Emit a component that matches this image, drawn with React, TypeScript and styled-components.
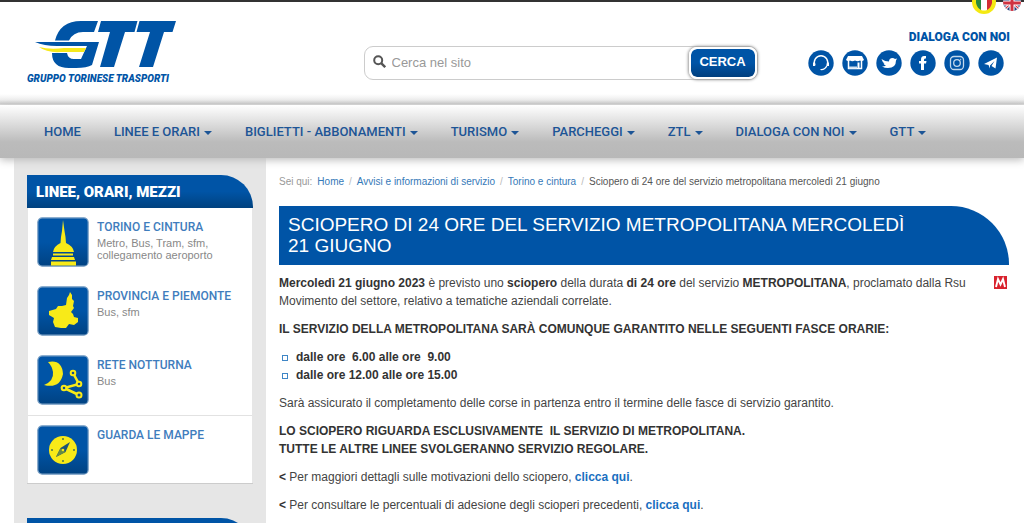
import React from "react";
import styled, { createGlobalStyle } from "styled-components";

const blue = "#0054a6";
const sans = `"Liberation Sans", Arial, sans-serif`;
const display = `Roboto, "Liberation Sans", sans-serif`;

const GlobalStyle = createGlobalStyle`
  *, *::before, *::after { box-sizing: border-box; }
  html { overflow: hidden; }
  body { margin: 0; background: #fff; color: #444; font: 13px/18px ${sans}; }
  a { text-decoration: none; }
`;

const TopBar = styled.div`
  height: 2px;
  background: #333;
`;

const Header = styled.header`
  display: flex;
  justify-content: space-between;
  height: 103px;
  padding: 0 14px 0 27px;
  background: linear-gradient(#fff 92px, #ededed 98px, #c9c9c9 102px, #e8e8e8 103px);
`;

const LogoLink = styled.a`
  padding-top: 18px;
  svg { display: block; }
`;

const SearchForm = styled.form`
  display: flex;
  align-items: center;
  width: 394px;
  height: 34px;
  margin: 44px 0 0 134px;
  padding-left: 8px;
  border: 1px solid #ccc;
  border-radius: 9px;
  background: #fff;
  svg { margin-bottom: 4px; }
`;

const SearchInput = styled.input`
  flex: 1;
  min-width: 0;
  padding: 0 6px;
  border: 0;
  outline: 0;
  background: transparent;
  color: #555;
  font: 13px/18px ${sans};
  &::placeholder { color: #999; opacity: 1; }
`;

const SearchButton = styled.button`
  width: 68px;
  height: 32px;
  padding: 0 0 2px;
  border: 2px solid #fff;
  border-radius: 8px;
  background: linear-gradient(${blue} 50%, #003f7e) padding-box;
  box-shadow: 0 0 3px 1px #999;
  color: #fff;
  font: bold 13px/18px ${sans};
`;

const Contacts = styled.div`
  display: flex;
  flex-direction: column;
  align-items: flex-end;
`;

const Languages = styled.div`
  display: flex;
  align-items: flex-start;
  gap: 6px;
  height: 28px;
  margin: -2px -12px 0 0;
  svg { display: block; }
`;

const ContactsTitle = styled.strong`
  color: ${blue};
  font: 900 12px/18px ${display};
`;

const SocialList = styled.div`
  display: flex;
  gap: 8px;
  padding: 4px 6px 0 0;
  svg { display: block; }
`;

const Nav = styled.nav`
  position: relative;
  display: flex;
  align-items: center;
  gap: 33px;
  height: 53px;
  padding: 0 44px;
  background: linear-gradient(#fff, #bbb 70%, #b8b8b8);
  box-shadow: 0 2px 8px #bbb;
`;

const NavLink = styled.a<{ $menu?: boolean }>`
  display: flex;
  align-items: center;
  gap: 4px;
  color: #1d5596;
  font: 500 13px/18px ${display};
  white-space: nowrap;
  &::after {
    content: "";
    display: ${(p) => (p.$menu ? "block" : "none")};
    margin-top: 2px;
    border: 4px solid transparent;
    border-top-color: currentColor;
    border-bottom: 0;
  }
`;

const Body = styled.div`
  display: flex;
  align-items: stretch;
  padding-left: 14px;
`;

const Sidebar = styled.aside`
  flex: 0 0 252px;
  padding: 17px 13px 0;
  background: #e6e6e6;
`;

const Panel = styled.section`
  margin-bottom: 34px;
  border-bottom: 1px solid #ccc;
`;

const PanelTitle = styled.h2`
  height: 33px;
  margin: 0;
  padding: 0 9px;
  border-radius: 0 32px 0 0;
  background: linear-gradient(${blue} 50%, #00427f);
  color: #fff;
  font: 900 15px/34px ${display};
`;

const Service = styled.a<{ $divided?: boolean }>`
  display: flex;
  gap: 8px;
  height: ${(p) => (p.$divided ? 68 : 69)}px;
  margin: 0 1px;
  padding: 9px;
  background: #fff;
  border-top: ${(p) => (p.$divided ? "1px solid #e2e2e2" : "0")};
  svg { flex: none; }
`;

const ServiceName = styled.h3`
  margin: 2px 0;
  color: #3f7dbd;
  font: 500 12px/16px ${display};
  white-space: nowrap;
`;

const ServiceText = styled.p`
  margin: 0;
  color: #888;
  font: 11px/12px ${sans};
`;

const Main = styled.main`
  flex: 1;
  min-width: 0;
  padding: 16px 15px 12px 13px;
`;

const Breadcrumb = styled.nav`
  display: flex;
  gap: 5px;
  font-size: 10px;
  line-height: 16px;
  color: #555;
  white-space: nowrap;
  a { color: #3579b8; }
`;

const Muted = styled.span`
  color: #999;
`;

const Slash = styled.span`
  color: #bbb;
`;

const Title = styled.h1`
  margin: 16px 0 9px;
  padding: 8px 96px 9px 9px;
  border-radius: 0 58px 0 0;
  background: ${blue};
  color: #fff;
  font: 19px/21px ${sans};
  text-transform: uppercase;
`;

const Lead = styled.div`
  display: flex;
  justify-content: space-between;
  align-items: flex-start;
  gap: 20px;
  svg { flex: none; margin: 2px 2px 0 0; }
`;

const Paragraph = styled.p`
  margin: 0 0 10px;
  font-size: 12px;
  white-space: pre-wrap;
  b { color: #333; }
  a { color: #1a6fbf; font-weight: bold; }
`;

const Times = styled.ul`
  margin: 0 0 10px;
  padding: 0 0 0 3px;
  list-style: none;
`;

const Time = styled.li`
  display: flex;
  align-items: center;
  gap: 8px;
  color: #333;
  font-size: 12px;
  font-weight: bold;
  white-space: pre;
  &::before {
    content: "";
    width: 6px;
    height: 6px;
    margin-top: 2px;
    border: 1px solid #3f86c6;
  }
`;

const Logo = () => (
  <svg width="152" height="67" viewBox="0 0 152 67" role="img" aria-label="GTT Gruppo Torinese Trasporti">
    <g fill={blue}>
      <path d="M71 1 67 12H56Q46 12 42 20.500H28Q33 1 54 1Z" />
      <path d="M8 22H72L65 45Q60 48 49 48H42Q25 48 25 33H40Q41 39 47 39H54L60 26H30Q17 26 8 22Z" />
      <path d="M74 1H110.500L107.500 12H98L87 47H73L83 12H71Z" />
      <path d="M112.500 1H149L145.500 12H137L126 47H112L123 12H109.500Z" />
    </g>
    <path d="M12 27Q23 30 37 28H59L57 32H34Q20 33 12 27Z" fill="#f6e91c" />
    <text x="0" y="62" fill={blue} fontFamily="Roboto, sans-serif" fontWeight="900" fontStyle="italic" fontSize="10">
      GRUPPO TORINESE TRASPORTI
    </text>
  </svg>
);

const SearchIcon = () => (
  <svg width="13" height="13" viewBox="0 0 13 13" fill="none" stroke="#555">
    <circle cx="5.200" cy="5.200" r="4" strokeWidth="2" />
    <path d="m8.200 8.200 4 4" strokeWidth="2.400" />
  </svg>
);

const socials: { name: string; art: React.ReactNode }[] = [
  {
    name: "Assistenza",
    art: (
      <g fill="none" stroke="#fff">
        <path d="M7 15.500A6.700 6.700 0 1 1 19 15.500" strokeWidth="1.400" />
        <path d="M19 15.500Q17 20 12.500 19.500" strokeWidth="1.200" />
        <path d="M6 12.500v3.500M20 12.500v3.500" strokeWidth="2" />
      </g>
    ),
  },
  {
    name: "Negozio",
    art: (
      <g>
        <path d="M6 6H20L22 10Q20 12 18 10.500Q16 12 13 10.500Q10 12 8 10.500Q6 12 4 10Z" fill="#fff" />
        <path d="M6.500 11V18.500H19.500V11" fill="none" stroke="#fff" strokeWidth="1.500" />
        <path d="M15.500 12.500h2v6h-2z" fill="#fff" />
        <path d="M7 16.500h8v2h-8z" fill="#cfe0f0" />
      </g>
    ),
  },
  {
    name: "Twitter",
    art: <path d="M5.500 9Q9 11.500 13 11.500Q13 8 16.500 8Q18 8 19 9L21 8.500L20 10.500Q20 18 12 18Q8.500 18 6 16.500Q8.500 16.500 10 15.500Q8 15 7.500 13.500H8.500Q6.500 12.500 5.500 9Z" fill="#fff" />,
  },
  {
    name: "Facebook",
    art: <path d="M11 20V13.500H9V11H11V9.500Q11 6 14 6H16V8.500H15Q14 8.500 14 10V11H16.500L16 13.500H14V20Z" fill="#fff" />,
  },
  {
    name: "Instagram",
    art: (
      <g fill="none" stroke="#c3d8ec" strokeWidth="1.300">
        <rect x="6.500" y="6.500" width="13" height="13" rx="3.500" />
        <circle cx="13" cy="13" r="3.300" />
        <path d="M16.200 9.500h1" />
      </g>
    ),
  },
  {
    name: "Telegram",
    art: <path d="M6 14 19 7.500 17.500 18.500 13.500 16 16.500 11 12 15.500V18.500L10.500 15Z" fill="#fff" />,
  },
];

const ItalianFlag = () => (
  <svg width="24" height="16" viewBox="0 0 24 16">
    <circle cx="12" cy="2" r="12" fill="#f4e912" />
    <path d="M4 0H9V10Q5 8 4 3Z" fill="#278a42" />
    <path d="M9 0H15V10Q12 11 9 10Z" fill="#fff" />
    <path d="M15 0H20V3Q19 8 15 10Z" fill="#d22f35" />
  </svg>
);

const BritishFlag = () => (
  <svg width="20" height="16" viewBox="0 0 20 16">
    <defs>
      <clipPath id="uk"><circle cx="10" cy="2" r="9" /></clipPath>
    </defs>
    <g clipPath="url(#uk)">
      <path d="M0 0H20V12H0Z" fill="#28437f" />
      <path d="m0 12 10-10 10 10" stroke="#fff" strokeWidth="3" fill="none" />
      <path d="m0 12 10-10 10 10" stroke="#cf3341" strokeWidth="1.200" fill="none" />
      <path d="M10 0V12M0 3H20" stroke="#fff" strokeWidth="5" />
      <path d="M10 0V12M0 3H20" stroke="#cf3341" strokeWidth="3" />
    </g>
  </svg>
);

const Tile = ({ id, children }: { id: string; children: React.ReactNode }) => (
  <svg width="52" height="50" viewBox="0 0 52 50">
    <defs>
      <linearGradient id={id} x2="0" y2="1">
        <stop offset=".5" stopColor={blue} />
        <stop offset="1" stopColor="#004282" />
      </linearGradient>
    </defs>
    <rect x=".8" y=".8" width="50.400" height="48.400" rx="4.500" fill={`url(#${id})`} stroke="#7ea3c7" strokeWidth="1.200" />
    {children}
  </svg>
);

const yellow = "#f8ea18";

const services = [
  {
    id: "torino",
    name: "TORINO E CINTURA",
    text: "Metro, Bus, Tram, sfm, collegamento aeroporto",
    art: (
      <g fill={yellow}>
        <path d="M26 3 27.500 14 28.500 20 29 26Q36 29 37 35H16Q17 29 23.500 26L24 20 25 14Z" />
        <path d="M16 36.500H36V38.500H16ZM14 43 15 40H37L38 43ZM14 44.500H39V48.500H14Z" />
      </g>
    ),
  },
  {
    id: "provincia",
    name: "PROVINCIA E PIEMONTE",
    text: "Bus, sfm",
    art: <path d="m33 6 2 3 0 4 2 2-1 5 1 2-3 4 2 2 1 3 4 1v4l-4 3-5-1-3 4-5 0-6-1-2-5 1-4-5-3 0-4 7-2 2-3h4l4-1 1-7 2-3Z" fill={yellow} />,
  },
  {
    id: "notturna",
    name: "RETE NOTTURNA",
    text: "Bus",
    art: (
      <g>
        <path d="M11 7Q25 4 26 19Q23 34 7 30Q17 26 16 17Q15 11 11 7Z" fill={yellow} />
        <g fill="#174f88" stroke={yellow} strokeWidth="2">
          <path d="M36 18 42 29 27 33 42 40" fill="none" strokeWidth="2.500" />
          <circle cx="36" cy="18" r="2.300" />
          <circle cx="42" cy="29" r="2.300" />
          <circle cx="27" cy="33" r="2.300" />
          <circle cx="42" cy="40" r="2.500" />
        </g>
      </g>
    ),
  },
  {
    id: "mappe",
    name: "GUARDA LE MAPPE",
    text: "",
    divided: true,
    art: (
      <g>
        <circle cx="26" cy="25" r="14" fill={yellow} />
        <path d="m33 17-4.500 10L19 32l4.500-9Z" fill="#1c5377" />
        <path d="m19 32 4.500-9 5 4Z" fill="#688b43" />
        <circle cx="26" cy="25" r="1.300" fill={yellow} />
        <path d="M26 13v2M26 35v2M14 25h2M36 25h2" stroke="#4e7548" strokeWidth="1.500" />
      </g>
    ),
  },
];

const menu = ["HOME", "LINEE E ORARI", "BIGLIETTI - ABBONAMENTI", "TURISMO", "PARCHEGGI", "ZTL", "DIALOGA CON NOI", "GTT"];

const MetroMark = () => (
  <svg width="13" height="13" viewBox="0 0 13 13" role="img" aria-label="Metropolitana">
    <path d="M0 0H13V13H0Z" fill="#d9232e" />
    <path d="M2 11 4 3 6.500 8.500 9 3 11 11" fill="none" stroke="#fff" strokeWidth="1.900" />
  </svg>
);

export default function App() {
  return (
    <>
      <GlobalStyle />
      <TopBar />
      <Header>
        <LogoLink href="#"><Logo /></LogoLink>
        <SearchForm role="search">
          <SearchIcon />
          <SearchInput type="search" aria-label="Cerca nel sito" placeholder="Cerca nel sito" />
          <SearchButton type="button">CERCA</SearchButton>
        </SearchForm>
        <Contacts>
          <Languages>
            <a href="#" aria-label="Italiano"><ItalianFlag /></a>
            <a href="#" aria-label="English"><BritishFlag /></a>
          </Languages>
          <ContactsTitle>DIALOGA CON NOI</ContactsTitle>
          <SocialList>
            {socials.map((s) => (
              <a href="#" key={s.name} aria-label={s.name}>
                <svg width="26" height="26" viewBox="0 0 26 26">
                  <circle cx="13" cy="13" r="12.700" fill={blue} />
                  {s.art}
                </svg>
              </a>
            ))}
          </SocialList>
        </Contacts>
      </Header>
      <Nav>
        {menu.map((m, i) => (
          <NavLink href="#" key={m} $menu={i > 0}>{m}</NavLink>
        ))}
      </Nav>
      <Body>
        <Sidebar>
          <Panel>
            <PanelTitle>LINEE, ORARI, MEZZI</PanelTitle>
            {services.map((s) => (
              <Service href="#" key={s.id} $divided={s.divided}>
                <Tile id={s.id}>{s.art}</Tile>
                <div>
                  <ServiceName>{s.name}</ServiceName>
                  {s.text && <ServiceText>{s.text}</ServiceText>}
                </div>
              </Service>
            ))}
          </Panel>
          <PanelTitle as="div" />
        </Sidebar>
        <Main>
          <Breadcrumb aria-label="Percorso">
            <Muted>Sei qui:</Muted>
            <a href="#">Home</a>
            <Slash>/</Slash>
            <a href="#">Avvisi e informazioni di servizio</a>
            <Slash>/</Slash>
            <a href="#">Torino e cintura</a>
            <Slash>/</Slash>
            <span>Sciopero di 24 ore del servizio metropolitana mercoledì 21 giugno</span>
          </Breadcrumb>
          <Title>Sciopero di 24 ore del servizio metropolitana mercoledì 21 giugno</Title>
          <Lead>
            <Paragraph>
              <b>Mercoledì 21 giugno 2023</b> è previsto uno <b>sciopero</b> della durata <b>di 24 ore</b> del servizio <b>METROPOLITANA</b>, proclamato dalla Rsu Movimento del settore, relativo a tematiche aziendali correlate.
            </Paragraph>
            <MetroMark />
          </Lead>
          <Paragraph><b>IL SERVIZIO DELLA METROPOLITANA SARÀ COMUNQUE GARANTITO NELLE SEGUENTI FASCE ORARIE:</b></Paragraph>
          <Times>
            <Time>dalle ore  6.00 alle ore  9.00</Time>
            <Time>dalle ore 12.00 alle ore 15.00</Time>
          </Times>
          <Paragraph>Sarà assicurato il completamento delle corse in partenza entro il termine delle fasce di servizio garantito.</Paragraph>
          <Paragraph>
            <b>LO SCIOPERO RIGUARDA ESCLUSIVAMENTE{"  "}IL SERVIZIO DI METROPOLITANA.<br />TUTTE LE ALTRE LINEE SVOLGERANNO SERVIZIO REGOLARE.</b>
          </Paragraph>
          <Paragraph><b>&lt;</b> Per maggiori dettagli sulle motivazioni dello sciopero, <a href="#">clicca qui</a>.</Paragraph>
          <Paragraph><b>&lt;</b> Per consultare le percentuali di adesione degli scioperi precedenti, <a href="#">clicca qui</a>.</Paragraph>
        </Main>
      </Body>
    </>
  );
}
